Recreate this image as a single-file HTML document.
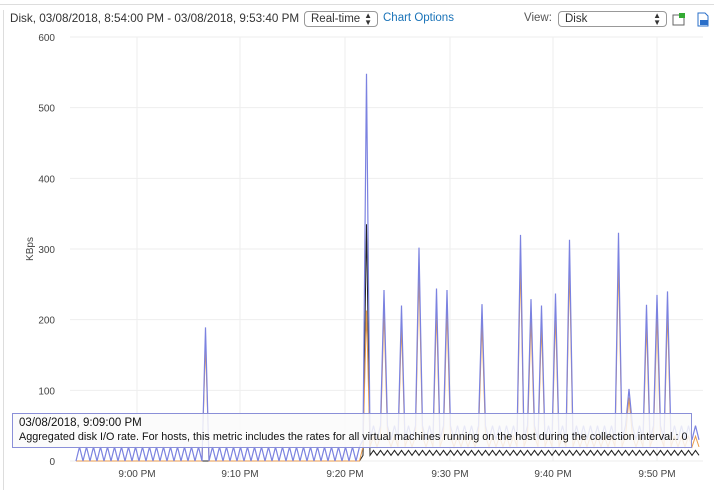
<!DOCTYPE html><html><head><style>
body{margin:0;width:714px;height:490px;background:#fff;font-family:"Liberation Sans",sans-serif;overflow:hidden;position:relative}
.t{position:absolute;font-size:11.5px;color:#333;white-space:nowrap}
.sel{position:absolute;border:1px solid #999;border-radius:4px;height:16px;font-size:11.5px;color:#333;background:#fff;box-sizing:border-box;padding:1px 6px}
.sel span{position:absolute;right:5px;top:0;font-size:8px;line-height:7px}
</style></head><body>
<div style="position:absolute;left:0;top:4px;width:714px;height:1px;background:#ddd"></div>
<div style="position:absolute;left:3px;top:10px;width:1px;height:480px;background:#ddd"></div>
<div class="t" style="left:10px;top:12px;font-size:11.7px">Disk, 03/08/2018, 8:54:00 PM - 03/08/2018, 9:53:40 PM</div>
<div class="sel" style="left:304px;top:11px;width:74px">Real-time<span>▲<br>▼</span></div>
<div class="t" style="left:383px;top:12px;color:#1a73b8">Chart Options</div>
<div class="t" style="left:524px;top:12px;color:#555">View:</div>
<div class="sel" style="left:558px;top:11px;width:109px">Disk<span>▲<br>▼</span></div>
<svg style="position:absolute;left:672px;top:12px" width="14" height="14"><rect x="1" y="3" width="11" height="10" fill="#fff" stroke="#666"/><rect x="7" y="1" width="6" height="5" fill="#3a3"/></svg>
<svg style="position:absolute;left:697px;top:12px" width="12" height="15"><path d="M1 1h7l3 3v10H1z" fill="#fff" stroke="#2a6fc9"/><rect x="3" y="8" width="8" height="5" fill="#2a6fc9"/></svg>
<svg id="c" style="position:absolute;left:0;top:0" width="714" height="490"></svg>
<div style="position:absolute;left:12px;top:413px;width:680px;height:35px;border:1px solid #8a8fd8;background:rgba(250,250,250,0.85);box-sizing:border-box"></div>
<div class="t" style="left:19px;top:417px;font-size:11.5px;color:#111">03/08/2018, 9:09:00 PM</div>
<div class="t" style="left:19px;top:431px;font-size:10.8px;color:#111">Aggregated disk I/O rate. For hosts, this metric includes the rates for all virtual machines running on the host during the collection interval.: 0</div>
<script>
var s='',Y=v=>461-v*0.7067,X=m=>74+m*10.4;
for(var i=0;i<=6;i++){var y=Y(i*100);s+='<line x1="70" x2="703" y1="'+y+'" y2="'+y+'" stroke="#eee"/><text x="55" y="'+(y+4)+'" font-size="10" fill="#444" text-anchor="end" font-family="Liberation Sans">'+(i*100)+'</text>';}
var ticks=[137,240,345,450,553,657],lab=['9:00 PM','9:10 PM','9:20 PM','9:30 PM','9:40 PM','9:50 PM'];
ticks.forEach((x,i)=>{s+='<line x1="'+x+'" x2="'+x+'" y1="37" y2="461" stroke="#eee"/><text x="'+x+'" y="477" font-size="10" fill="#444" text-anchor="middle" font-family="Liberation Sans">'+lab[i]+'</text>';});
s+='<text transform="translate(33,249) rotate(-90)" font-size="10" fill="#444" text-anchor="middle" font-family="Liberation Sans">KBps</text>';
var spikes={207:189,368:548,383:242,400:220,418:302,435:244,446:242,481:222,522:320,530:229,541:220,555:237,571:313,619:323,628:102,646:221,656:235,667:240};
var b='',o='',k='';
for(var x=76;x<=701;x+=3.5){var i=Math.round((x-76)/3.5),v,ov,kv;
var sp=null;for(var p in spikes){if(Math.abs(p-x)<1.8)sp=spikes[p];}
if(x<362){v=(i%2)?20:0;ov=0;kv=0;}else{v=(i%2)?50:30;ov=(i%2)?35:20;kv=(i%2)?15:8;}
if(sp){v=sp;ov=sp*0.88;}
if(Math.abs(x-368)<2){kv=335;ov=213;}
b+=(b?'L':'M')+x+' '+Y(v);o+=(o?'L':'M')+x+' '+Y(ov);k+=(k?'L':'M')+x+' '+Y(kv);}
s+='<path d="'+k+'" fill="none" stroke="#222" stroke-width="1"/><path d="'+o+'" fill="none" stroke="#e89a4a" stroke-width="1"/><path d="'+b+'" fill="none" stroke="#7b82e0" stroke-width="1.2"/>';
document.getElementById('c').innerHTML=s;
</script>
</body></html>
